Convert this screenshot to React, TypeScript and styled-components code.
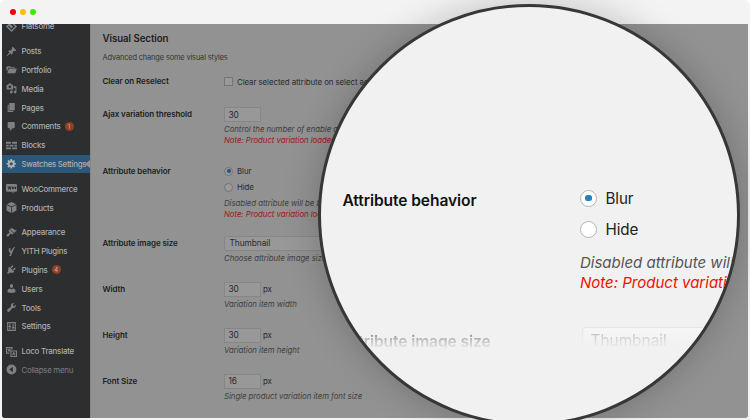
import React from "react";
import styled, { createGlobalStyle } from "styled-components";

const GlobalStyle = createGlobalStyle`
  * { box-sizing: border-box; }
  body { margin: 0; background: #fff; overflow: hidden; }
`;

const Stage = styled.div`
  position: relative;
  width: 750px;
  height: 420px;
  overflow: hidden;
  font-family: Inter, "Liberation Sans", sans-serif;
`;

const BrowserWindow = styled.div`
  display: flex;
  flex-direction: column;
  height: 420px;
  padding: 0 2px 2px;
  background: #f3f3f3;
  border-radius: 6px 6px 0 0;
`;

const TitleBar = styled.header`
  display: flex;
  align-items: center;
  flex: none;
  gap: 4px;
  height: 24px;
  padding-left: 8px;
`;

const TrafficLight = styled.i<{ $color: string }>`
  width: 6px;
  height: 6px;
  border-radius: 50%;
  background: ${(p) => p.$color};
`;

const Page = styled.div`
  display: flex;
  flex: none;
  height: 394px;
  overflow: hidden;
  background: #929292;
  border-radius: 0 0 3px 3px;
`;

const Sidebar = styled.nav`
  flex: none;
  width: 88px;
  height: 394px;
  overflow: hidden;
  background: #2c2e30;
`;

const MenuGroup = styled.div<{ $first?: boolean }>`
  margin-top: ${(p) => (p.$first ? "-7px" : "6px")};
`;

const MenuItem = styled.div<{ $active?: boolean; $muted?: boolean }>`
  position: relative;
  display: flex;
  align-items: center;
  height: 18.8px;
  padding-left: 4px;
  gap: 4.5px;
  font-size: 7.9px;
  font-weight: ${(p) => (p.$muted ? 400 : 500)};
  letter-spacing: ${(p) => (p.$active || p.$muted ? "-0.3px" : "-0.22px")};
  white-space: nowrap;
  color: ${(p) => (p.$muted ? "#7c7e80" : "#acadae")};
  background: ${(p) => (p.$active ? "#2b5878" : "transparent")};
`;

const ActiveArrow = styled.span`
  position: absolute;
  right: 0;
  top: 5px;
  border: solid transparent;
  border-width: 4.5px 5px 4.5px 0;
  border-right-color: #929292;
`;

const MenuIcon = styled.svg<{ $bright?: boolean }>`
  flex: none;
  width: 11px;
  height: 11px;
  fill: ${(p) => (p.$bright ? "#b0b4b7" : "#7e8184")};
`;

const Badge = styled.span`
  display: flex;
  align-items: center;
  justify-content: center;
  width: 9px;
  height: 9px;
  margin-left: -0.5px;
  border-radius: 50%;
  font-size: 6px;
  letter-spacing: 0;
  color: #b5aaa6;
  background: #933f24;
`;

const Content = styled.main`
  flex: 1;
  padding: 8px 0 0 11.5px;
  border-left: 1px solid #868686;
  color: #333435;
`;

const Title = styled.h2`
  margin: 0;
  height: 13px;
  line-height: 13px;
  font-size: 9.7px;
  font-weight: 600;
  letter-spacing: -0.06px;
  color: #1d1e20;
`;

const Intro = styled.p`
  margin: 6px 0 10px;
  height: 13px;
  line-height: 13px;
  font-size: 7.4px;
  letter-spacing: -0.13px;
`;

const FormRow = styled.section<{ $height: number }>`
  display: grid;
  grid-template-columns: 121.5px 1fr;
  height: ${(p) => p.$height}px;
`;

const Label = styled.div`
  height: 15px;
  line-height: 15px;
  font-size: 8px;
  font-weight: 600;
  letter-spacing: -0.09px;
  white-space: nowrap;
  color: #1d1e20;
`;

const Line = styled.div<{ $height?: number; $gap?: number }>`
  display: flex;
  align-items: center;
  gap: ${(p) => p.$gap ?? 4}px;
  height: ${(p) => p.$height ?? 15}px;
  font-size: 7.9px;
  letter-spacing: -0.08px;
  white-space: nowrap;
  color: #2a2b2c;
`;

const NumberBox = styled.span`
  display: flex;
  align-items: center;
  width: 37px;
  height: 15px;
  padding-left: 3.5px;
  border: 1px solid #868686;
  background: #989898;
  font-size: 8.4px;
`;

const SelectBox = styled(NumberBox)`
  width: 140px;
  padding-left: 4.5px;
  border-radius: 2px;
`;

const CheckBox = styled.i`
  width: 9px;
  height: 9px;
  border: 1px solid #747576;
  background: #989898;
`;

const Radio = styled.i<{ $checked?: boolean; $size: number; $tone: "dim" | "bright" }>`
  display: flex;
  flex: none;
  align-items: center;
  justify-content: center;
  width: ${(p) => p.$size}px;
  height: ${(p) => p.$size}px;
  border: 1px solid ${(p) => (p.$tone === "dim" ? "#727374" : "#b1b4b9")};
  border-radius: 50%;
  background: ${(p) => (p.$tone === "dim" ? "#9a9a9a" : "#fff")};

  &::after {
    content: "";
    display: ${(p) => (p.$checked ? "block" : "none")};
    width: ${(p) => (p.$tone === "dim" ? 4 : 7)}px;
    height: ${(p) => (p.$tone === "dim" ? 4 : 6)}px;
    margin-top: ${(p) => (p.$tone === "dim" ? 0 : -1)}px;
    border-radius: 2.5px;
    background: ${(p) => (p.$tone === "dim" ? "#1c5680" : "#2a83b8")};
  }
`;

const Hint = styled.div<{ $warning?: boolean; $spaced?: boolean }>`
  height: 11px;
  margin-top: ${(p) => (p.$spaced ? "2px" : "0")};
  line-height: 11px;
  font-size: 7.8px;
  font-style: italic;
  letter-spacing: -0.04px;
  white-space: nowrap;
  color: ${(p) => (p.$warning ? "#9b1a18" : "#3f4041")};
`;

const Lens = styled.div`
  position: absolute;
  left: 318px;
  top: 4px;
  width: 422px;
  height: 422px;
  padding: 178px 0 0 21.5px;
  overflow: hidden;
  border: 3px solid #373737;
  border-radius: 50%;
  background: #f1f1f1;
  box-shadow: 0 0 36px rgba(0, 0, 0, 0.22);
`;

const LensRow = styled.div`
  display: grid;
  grid-template-columns: 237.5px 1fr;
  height: 141px;
`;

const LensLabel = styled.div`
  height: 30px;
  line-height: 31px;
  font-size: 15.6px;
  font-weight: 600;
  letter-spacing: -0.1px;
  white-space: nowrap;
  color: #111;
`;

const LensOption = styled.div`
  display: flex;
  align-items: center;
  gap: 8.5px;
  height: 31px;
  padding-bottom: 4px;
  font-size: 15.2px;
  letter-spacing: -0.1px;
  color: #222;
`;

const LensHints = styled.div`
  margin-top: 5.5px;
`;

const LensHint = styled.div<{ $warning?: boolean }>`
  height: 20.5px;
  line-height: 20.5px;
  font-size: 15px;
  font-style: italic;
  white-space: nowrap;
  color: ${(p) => (p.$warning ? "#f01000" : "#555")};
`;

const FadedRow = styled(LensRow)`
  height: 30px;
  mask-image: linear-gradient(to bottom, rgba(0, 0, 0, 0.55) 5px, rgba(0, 0, 0, 0.22) 14px, transparent 24px);
`;

const LensSelect = styled.div`
  width: 160px;
  height: 30px;
  margin: 0.5px 0 0 1.5px;
  padding-left: 8px;
  border: 1px solid #ddd;
  border-radius: 4px;
  line-height: 26px;
  font-size: 15.4px;
  color: #888;
  background: #f8f8f8;
`;

const paths: Record<string, string> = {
  posts:
    "M10.44 3.02l1.82-1.82 6.36 6.35-1.83 1.82c-1.05-.68-2.48-.57-3.41.36l-.75.75c-.92.93-1.04 2.35-.35 3.41l-1.83 1.82-2.41-2.41-2.8 2.79c-.42.42-3.38 2.71-3.8 2.29s1.86-3.39 2.28-3.81l2.79-2.79L4.1 9.36l1.83-1.82c1.05.69 2.48.57 3.4-.36l.75-.75c.93-.92 1.05-2.35.36-3.41z",
  portfolio:
    "M0 6h2V4h6l1 1.500h7V7H4L2 14zM5 8h14.500L17 17H2.500z",
  media:
    "M13 11V4c0-.55-.45-1-1-1h-1.67L9 1H5L3.67 3H2c-.55 0-1 .45-1 1v7c0 .55.45 1 1 1h10c.55 0 1-.45 1-1zM7 4.5c1.38 0 2.5 1.12 2.5 2.5S8.38 9.5 7 9.5 4.5 8.38 4.5 7 5.62 4.5 7 4.5zM14 6h5v10.5c0 1.38-1.12 2.5-2.5 2.5S14 17.88 14 16.5s1.12-2.5 2.5-2.5c.17 0 .34.02.5.05V9h-3V6zm-4 8.05V13h2v3.5c0 1.38-1.12 2.5-2.5 2.5S7 17.88 7 16.5 8.12 14 9.5 14c.17 0 .34.02.5.05z",
  pages: "M6 15V2h10v13H6zm-1 1h8v2H3V5h2v11z",
  comments:
    "M5 2h9c1.1 0 2 .9 2 2v7c0 1.1-.9 2-2 2h-2l-5 5v-5H5c-1.1 0-2-.9-2-2V4c0-1.1.9-2 2-2z",
  blocks:
    "M0 3h9v4H0zM11 3h9v4h-9zM0 8.500h5v3.500H0zM6.500 8.500h7v3.500h-7zM15 8.500h5v3.500h-5zM0 13.500h9V17H0zM11 13.500h9V17h-9z",
  gear: "M18 12h-2.18c-.17.7-.44 1.35-.81 1.93l1.54 1.54-2.1 2.1-1.54-1.54c-.58.36-1.23.63-1.91.79V19H8v-2.18c-.68-.16-1.33-.43-1.91-.79l-1.54 1.54-2.12-2.12 1.54-1.54c-.36-.58-.63-1.23-.79-1.91H1V9.03h2.17c.16-.7.44-1.35.8-1.94L2.43 5.55l2.1-2.1 1.54 1.54c.58-.37 1.24-.64 1.93-.81V2h3v2.18c.68.16 1.33.43 1.91.79l1.54-1.54 2.12 2.12-1.54 1.54c.36.59.64 1.24.8 1.94H18V12zm-8.5 1.5c1.66 0 3-1.34 3-3s-1.34-3-3-3-3 1.34-3 3 1.34 3 3 3z",
  products: "M10 0l8.5 4-8.5 4.2L1.5 4zM1 5.5l8.3 4.1V20L1 15.5zM19 5.5l-8.3 4.1V20l8.3-4.5z",
  appearance:
    "M14.48 11.06L7.41 3.99l1.5-1.5c.5-.56 2.3-.47 3.51.32 1.21.8 1.43 1.28 2.91 2.1 1.18.64 2.45 1.26 4.45.85zm-.71.71L6.7 4.7 4.93 6.47c-.39.39-.39 1.02 0 1.41l1.06 1.06c.39.39.39 1.03 0 1.42-.6.6-1.43 1.11-2.21 1.69-.35.26-.7.53-1.01.84C1.43 14.23.4 16.08 1.4 17.07c.99 1 2.84-.03 4.18-1.36.31-.31.58-.66.85-1.02.57-.78 1.08-1.61 1.69-2.21.39-.39 1.02-.39 1.41 0l1.06 1.06c.39.39 1.02.39 1.41 0z",
  yith: "M5 4h3v4l1.5 1L12 4h3l-4 9-2 5H6l2-5-3-3zM14 2h2v2h-2z",
  plugins:
    "M13.11 4.36L9.87 7.6 8 5.73l3.24-3.24c.35-.34 1.05-.2 1.56.32.52.51.66 1.21.31 1.55zm-8 1.77l.91-1.12 9.01 9.01-1.19.84c-.71.71-2.63 1.16-3.82 1.16H6.14L4.9 17.26c-.59.59-1.54.59-2.12 0-.59-.58-.59-1.53 0-2.12l1.24-1.24v-3.88c0-1.13.4-3.19 1.09-3.89zm7.26 3.97l3.24-3.24c.34-.35 1.04-.21 1.55.31.52.51.66 1.21.31 1.55l-3.24 3.25z",
  users:
    "M10 9.25c-2.27 0-2.73-3.44-2.73-3.44C7 4.02 7.82 2 9.97 2c2.16 0 2.98 2.02 2.71 3.81 0 0-.41 3.44-2.68 3.44zm0 2.57L12.72 10c2.39 0 4.52 2.33 4.52 4.53v2.49s-3.65 1.13-7.24 1.13c-3.65 0-7.24-1.13-7.24-1.13v-2.49c0-2.25 1.94-4.48 4.47-4.48z",
  tools:
    "M16.68 9.77c-1.34 1.34-3.3 1.67-4.95.99l-5.41 6.52c-.99.99-2.59.99-3.58 0s-.99-2.59 0-3.57l6.52-5.42c-.68-1.65-.35-3.61.99-4.95 1.28-1.28 3.12-1.62 4.72-1.06l-2.89 2.89 2.82 2.82 2.86-2.87c.53 1.58.18 3.39-1.08 4.65z",
  settings:
    "M2 2h16v16H2zM4 4v12h12V4zM6 5h2v4h1.5v2H8v4H6v-4H4.700V9H6zM12 5h2v6h1.500v2H14v2h-2v-2h-1.500v-2H12z",
  woo: "M2 2h16a2 2 0 012 2v10a2 2 0 01-2 2h-5l2 3-5-3H2a2 2 0 01-2-2V4a2 2 0 012-2zM3 6l1 6h1.500L6.500 9l1 3H9l1-6H8.500L8 9.500 7 6H6L5 9.500 4.500 6zM11 7v4h3V7zM15.500 7v4h3V7z",
  loco: "M0 2h12v5h-2V4H2v8h4v2H0zM8 8h12v12H8zM10 10v8h8v-8zM13 11h2v2h2v1.500h-1l1 2.500h-2l-1-2-1 2h-2l1.500-3H11.500V13H13zM5 5h2v1h2v1.500H7L8 10H6L5.500 9 4.500 10H3l1.500-2.500H3V6h2z",
  flatsome: "M10 0l10 10-10 10L0 10zM10 3.500L8 5.500l5 5-3 3-5-5-1.500 1.500 6.500 6.500 6.500-6.500z",
  collapse: "M10 1a9 9 0 100 18 9 9 0 000-18zM12.500 5v10L6 10z",
};

interface Entry {
  icon: string;
  text: string;
  badge?: number;
}

const groups: Entry[][] = [
  [{ icon: "flatsome", text: "Flatsome" }],
  [
    { icon: "posts", text: "Posts" },
    { icon: "portfolio", text: "Portfolio" },
    { icon: "media", text: "Media" },
    { icon: "pages", text: "Pages" },
    { icon: "comments", text: "Comments", badge: 1 },
    { icon: "blocks", text: "Blocks" },
    { icon: "gear", text: "Swatches Settings" },
  ],
  [
    { icon: "woo", text: "WooCommerce" },
    { icon: "products", text: "Products" },
  ],
  [
    { icon: "appearance", text: "Appearance" },
    { icon: "yith", text: "YITH Plugins" },
    { icon: "plugins", text: "Plugins", badge: 4 },
    { icon: "users", text: "Users" },
    { icon: "tools", text: "Tools" },
    { icon: "settings", text: "Settings" },
  ],
  [
    { icon: "loco", text: "Loco Translate" },
    { icon: "collapse", text: "Collapse menu" },
  ],
];

const sizes = [
  { label: "Width", value: 30, hint: "Variation item width" },
  { label: "Height", value: 30, hint: "Variation item height" },
  { label: "Font Size", value: 16, hint: "Single product variation item font size" },
];

export default function App() {
  return (
    <Stage>
      <GlobalStyle />
      <BrowserWindow>
        <TitleBar>
          <TrafficLight $color="#f70008" />
          <TrafficLight $color="#fdbd06" />
          <TrafficLight $color="#3fe80a" />
        </TitleBar>
        <Page>
          <Sidebar>
            {groups.map((group, index) => (
              <MenuGroup key={index} $first={index === 0}>
                {group.map(({ icon, text, badge }) => {
                  const active = icon === "gear";
                  return (
                    <MenuItem key={text} $active={active} $muted={icon === "collapse"}>
                      <MenuIcon viewBox="0 0 20 20" $bright={active}>
                        <path d={paths[icon]} fillRule="evenodd" />
                      </MenuIcon>
                      {text}
                      {badge && <Badge>{badge}</Badge>}
                      {active && <ActiveArrow />}
                    </MenuItem>
                  );
                })}
              </MenuGroup>
            ))}
          </Sidebar>
          <Content>
            <Title>Visual Section</Title>
            <Intro>Advanced change some visual styles</Intro>
            <FormRow $height={33}>
              <Label>Clear on Reselect</Label>
              <Line>
                <CheckBox />
                Clear selected attribute on select again
              </Line>
            </FormRow>
            <FormRow $height={56.5}>
              <Label>Ajax variation threshold</Label>
              <div>
                <Line><NumberBox>30</NumberBox></Line>
                <Hint $spaced>Control the number of enable ajax variation</Hint>
                <Hint $warning>Note: Product variation loaded via ajax</Hint>
              </div>
            </FormRow>
            <FormRow $height={72}>
              <Label>Attribute behavior</Label>
              <div>
                <Line>
                  <Radio $checked $size={9} $tone="dim" />
                  Blur
                </Line>
                <Line $height={17}>
                  <Radio $size={9} $tone="dim" />
                  Hide
                </Line>
                <Hint $spaced>Disabled attribute will be blurred</Hint>
                <Hint $warning>Note: Product variation loaded</Hint>
              </div>
            </FormRow>
            <FormRow $height={46}>
              <Label>Attribute image size</Label>
              <div>
                <Line><SelectBox>Thumbnail</SelectBox></Line>
                <Hint $spaced>Choose attribute image size</Hint>
              </div>
            </FormRow>
            {sizes.map(({ label, value, hint }) => (
              <FormRow key={label} $height={46}>
                <Label>{label}</Label>
                <div>
                  <Line $gap={2}>
                    <NumberBox>{value}</NumberBox>
                    px
                  </Line>
                  <Hint $spaced>{hint}</Hint>
                </div>
              </FormRow>
            ))}
          </Content>
        </Page>
      </BrowserWindow>
      <Lens>
        <LensRow>
          <LensLabel>Attribute behavior</LensLabel>
          <div>
            <LensOption>
              <Radio $checked $size={17} $tone="bright" />
              Blur
            </LensOption>
            <LensOption>
              <Radio $size={17} $tone="bright" />
              Hide
            </LensOption>
            <LensHints>
              <LensHint>Disabled attribute will be</LensHint>
              <LensHint $warning>Note: Product variation</LensHint>
            </LensHints>
          </div>
        </LensRow>
        <FadedRow>
          <LensLabel>Attribute image size</LensLabel>
          <LensSelect>Thumbnail</LensSelect>
        </FadedRow>
      </Lens>
    </Stage>
  );
}
